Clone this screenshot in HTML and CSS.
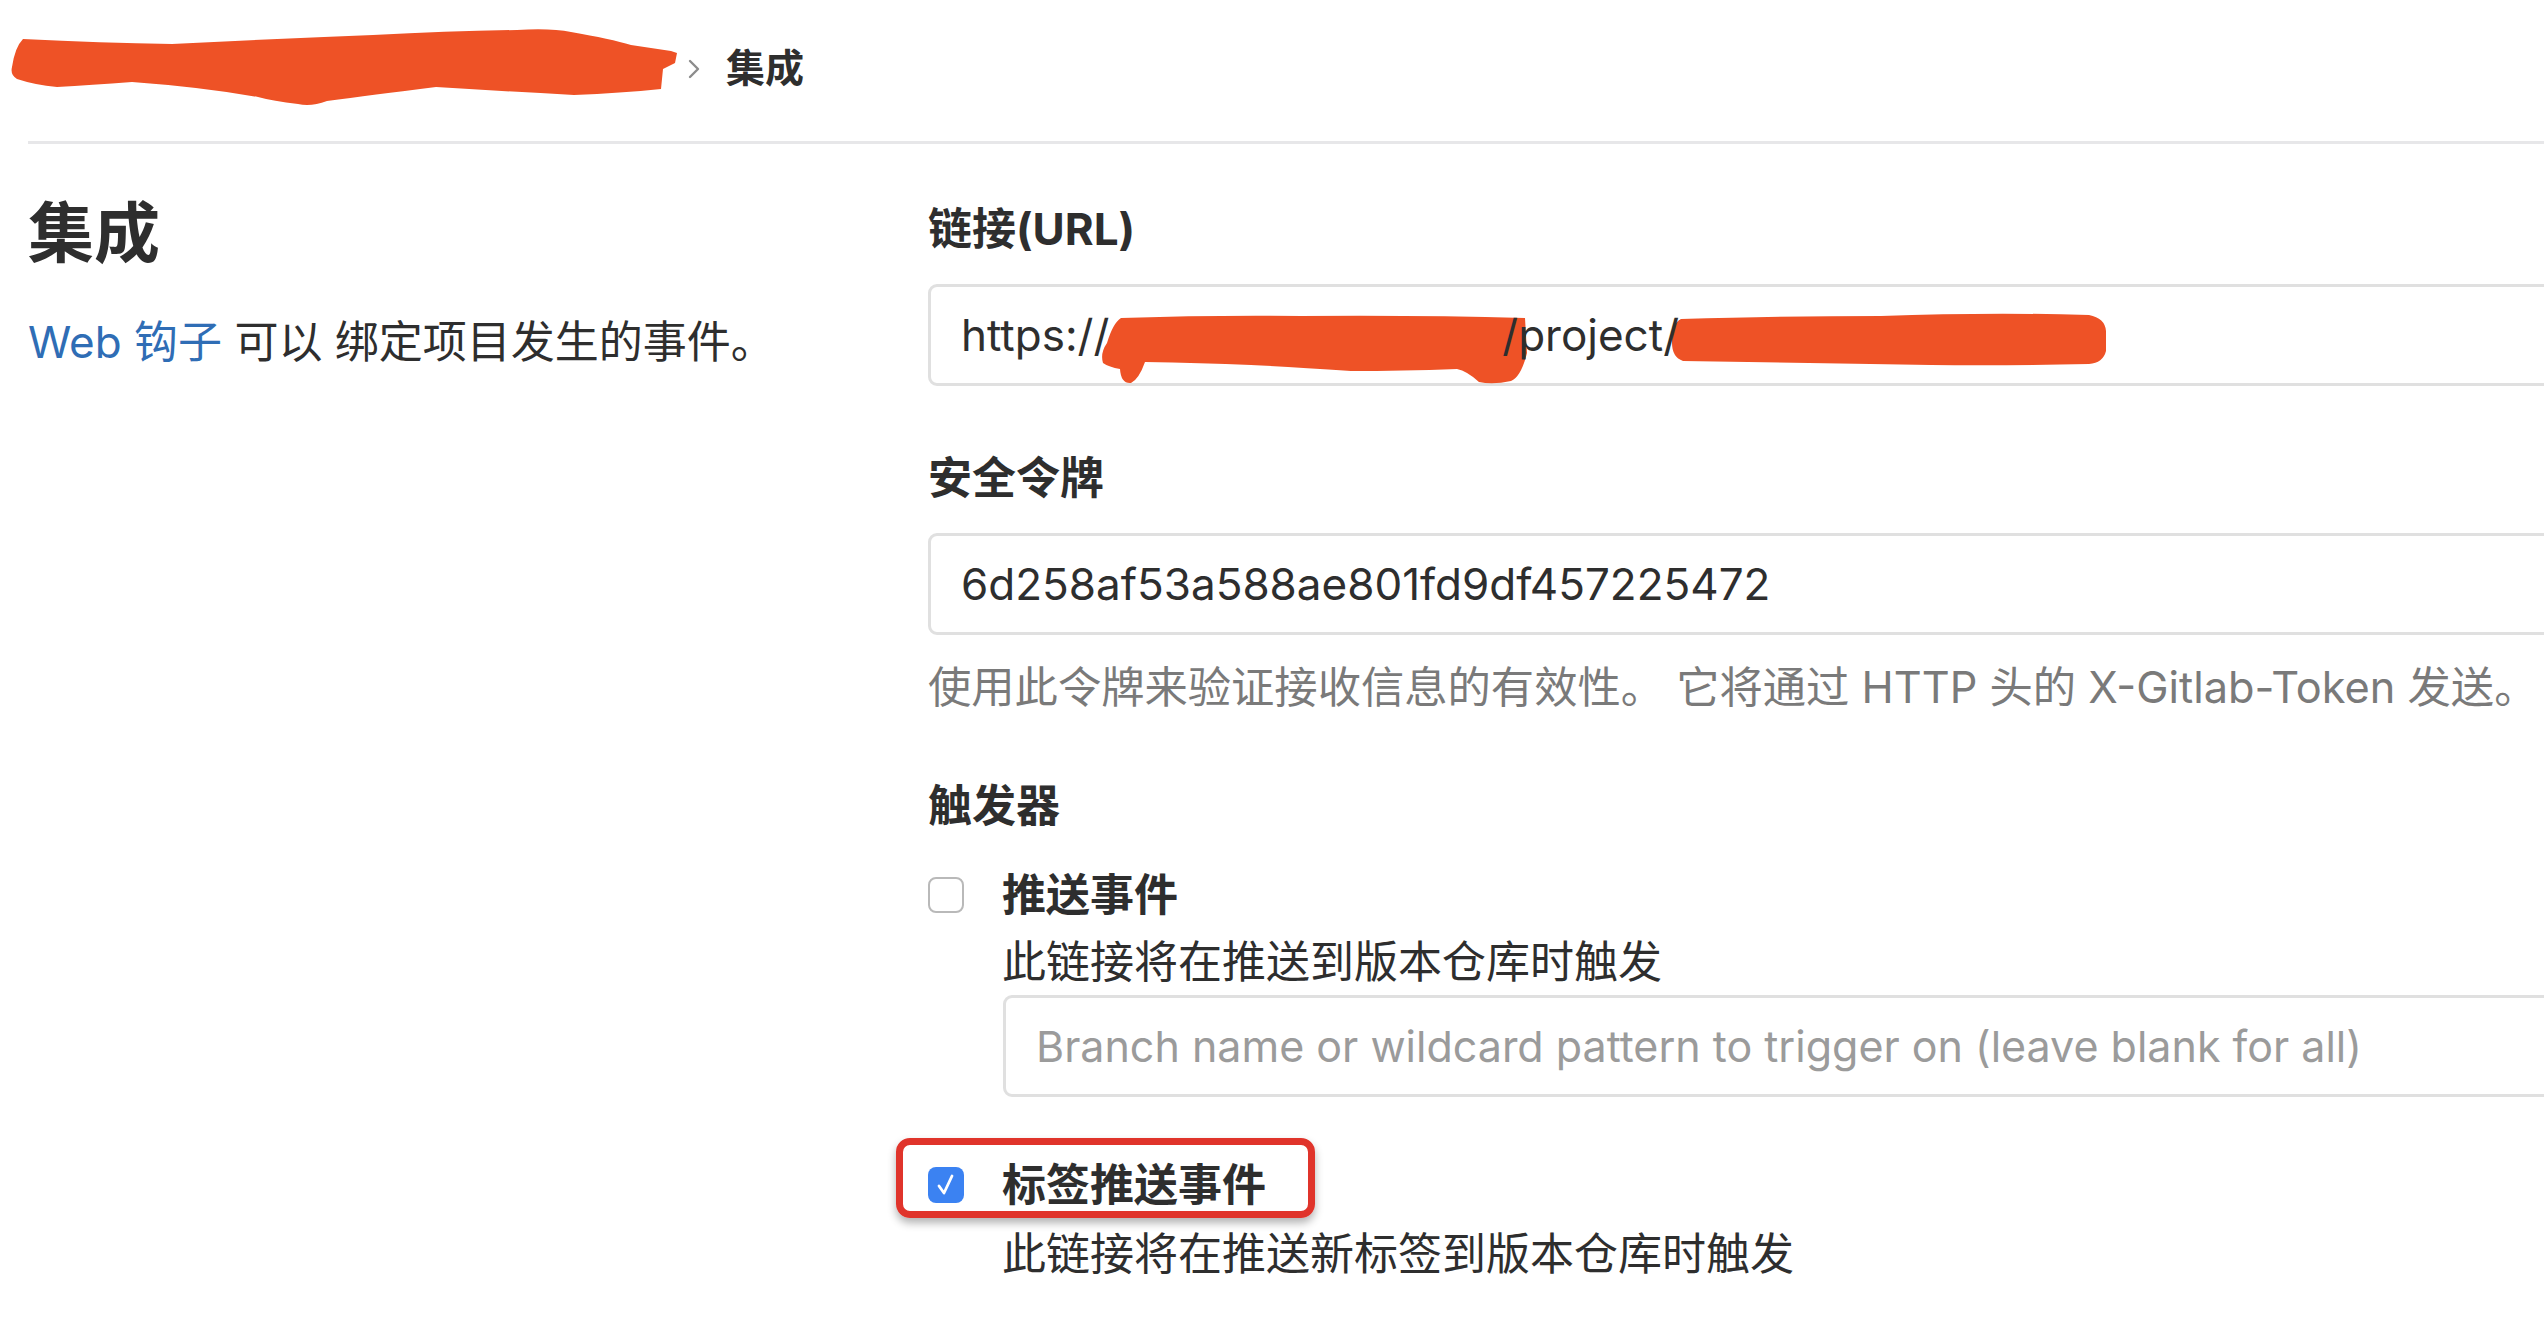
FILE: index.html
```html
<!DOCTYPE html>
<html lang="zh-CN">
<head>
<meta charset="utf-8">
<title>集成</title>
<link rel="stylesheet" href="styles.css">
</head>
<body>
<div class="page">
  <div class="crumbs">
    <svg class="redact-crumb" width="668" height="78" viewBox="0 0 668 78">
      <path d="M12 10 Q90 14 161 15 Q260 10 362 6 Q440 2 506 1 Q540 -1 560 3 Q600 10 620 16 L660 22 L666 24 L664 34 L652 40 L650 60 Q610 64 563 66 Q490 62 425 58 Q360 66 316 72 Q300 78 287 75 Q262 72 247 68 Q190 58 121 53 Q80 56 46 58 Q24 56 6 50 Q-1 46 1 38 Q4 18 12 10 Z" fill="#ee5226"/>
    </svg>
    <svg class="chev" width="14" height="22" viewBox="0 0 14 22">
      <path d="M3 3 L11 11 L3 19" fill="none" stroke="#8c8c8c" stroke-width="2.4" stroke-linecap="round" stroke-linejoin="round"/>
    </svg>
    <span class="crumb-current">集成</span>
  </div>

  <div class="settings">
    <div class="intro">
      <h1 class="title">集成</h1>
      <p class="desc"><a class="link">Web 钩子</a> 可以 绑定项目发生的事件。</p>
    </div>

    <div class="form">
      <div class="group group-url">
        <div class="label">链接(URL)</div>
        <div class="field field-url">
          <span class="val">https://</span>
          <svg class="redact-1" width="428" height="72" viewBox="0 0 428 72">
            <path d="M20 5 Q110 2 200 3 Q320 2 424 5 L426 40 Q420 64 410 68 Q392 72 378 69 Q366 58 356 56 Q300 58 250 58 Q190 54 150 52 Q100 50 44 49 Q38 66 30 70 Q20 71 19 56 Q8 54 2 50 Q-1 40 6 30 Q12 10 20 5 Z" fill="#ee5226"/>
          </svg>
          <span class="val val-path">/project/</span>
          <svg class="redact-2" width="436" height="54" viewBox="0 0 436 54">
            <path d="M10 6 Q120 3 210 3 Q320 -1 418 2 Q434 5 435 18 L435 38 Q432 50 418 51 Q330 53 260 52 Q140 50 12 48 Q1 44 1 30 Q1 10 10 6 Z" fill="#ee5226"/>
          </svg>
        </div>
      </div>

      <div class="group group-token">
        <div class="label">安全令牌</div>
        <div class="field"><span class="val">6d258af53a588ae801fd9df457225472</span></div>
        <div class="help">使用此令牌来验证接收信息的有效性。 它将通过 HTTP 头的 X-Gitlab-Token 发送。</div>
      </div>

      <div class="group group-trigger">
        <div class="label label-trigger">触发器</div>

        <div class="check-item">
          <div class="check-row">
            <span class="box"></span>
            <span class="check-label">推送事件</span>
          </div>
          <div class="check-help">此链接将在推送到版本仓库时触发</div>
          <div class="field field-branch"><span class="placeholder">Branch name or wildcard pattern to trigger on (leave blank for all)</span></div>
        </div>

        <div class="check-item item-tag">
          <div class="check-row">
            <span class="box box-checked">
              <svg width="36" height="36" viewBox="0 0 36 36"><path d="M11 19 L16 26 L24 9" fill="none" stroke="#fff" stroke-width="2.8" stroke-linecap="round" stroke-linejoin="round"/></svg>
            </span>
            <span class="check-label">标签推送事件</span>
            <span class="highlight"></span>
          </div>
          <div class="check-help check-help-tag">此链接将在推送新标签到版本仓库时触发</div>
        </div>
      </div>
    </div>
  </div>
</div>
</body>
</html>
```

FILE: styles.css
```css
html, body {
  margin: 0;
  padding: 0;
  background: #ffffff;
}

body {
  width: 2544px;
  height: 1318px;
  overflow: hidden;
  font-family: Inter, "Noto Sans CJK SC", "Noto Sans", sans-serif;
  color: #2e2e2e;
}

.page {
  width: 2544px;
}

/* breadcrumbs */
.crumbs {
  margin-left: 28px;
  height: 135px;
  padding-bottom: 6px;
  border-bottom: 3px solid #e7e7e9;
  display: flex;
  align-items: center;
}

.redact-crumb {
  margin-left: -17px;
  flex: none;
}

.chev {
  flex: none;
  margin-left: 8px;
  margin-top: 2px;
}

.crumb-current {
  margin-left: 25px;
  font-size: 39px;
  font-weight: 700;
  line-height: 56px;
  color: #2e2e2e;
}

/* settings */
.settings {
  display: flex;
  margin-left: 28px;
}

.intro {
  width: 900px;
  flex: none;
}

.title {
  margin: 49px 0 0;
  font-size: 66px;
  line-height: 80px;
  font-weight: 700;
  color: #2e2e2e;
}

.desc {
  margin: 39px 0 0;
  font-size: 44px;
  line-height: 60px;
  color: #2e2e2e;
  white-space: nowrap;
}

.link {
  color: #2f6db5;
  text-decoration: none;
}

.form {
  width: 1800px;
  flex: none;
  padding-top: 55px;
}

.label {
  font-size: 44px;
  line-height: 60px;
  font-weight: 700;
  color: #2e2e2e;
  margin-bottom: 25px;
}

.field {
  box-sizing: border-box;
  height: 102px;
  border: 3px solid #e0e0e0;
  border-radius: 9px;
  padding: 0 30px;
  display: flex;
  align-items: center;
  font-size: 44px;
  color: #2e2e2e;
  white-space: nowrap;
}

.val {
  line-height: 60px;
}

.redact-1 {
  flex: none;
  align-self: flex-start;
  margin-top: 26px;
  margin-left: -8px;
  margin-right: -27px;
}

.val-path {
  position: relative;
}

.redact-2 {
  flex: none;
  align-self: flex-start;
  margin-top: 26px;
  margin-left: -8px;
}

.group-url {
  margin-bottom: 62px;
}

.help {
  margin-top: 22px;
  font-size: 43.3px;
  line-height: 60px;
  color: #7a7a7a;
  white-space: nowrap;
}

.group-token {
  margin-bottom: 59px;
}

.label-trigger {
  margin-bottom: 29px;
}

.check-row {
  position: relative;
  display: flex;
  align-items: center;
  height: 60px;
}

.box {
  box-sizing: border-box;
  width: 36px;
  height: 36px;
  border: 2px solid #b9b9b9;
  border-radius: 8px;
  background: #ffffff;
  flex: none;
  margin-right: 38px;
}

.box-checked {
  border: none;
  background: #3b82f2;
  display: flex;
}

.check-label {
  font-size: 44px;
  line-height: 60px;
  font-weight: 700;
  color: #2e2e2e;
}

.check-help {
  margin-top: 7px;
  padding-left: 74px;
  font-size: 44px;
  line-height: 60px;
  color: #2e2e2e;
  white-space: nowrap;
}

.field-branch {
  margin-top: 3px;
  margin-left: 75px;
  font-size: 43px;
}

.placeholder {
  color: #9b9b9b;
  line-height: 60px;
}

.item-tag {
  margin-top: 58px;
}

.check-help-tag {
  margin-top: 9px;
}

.highlight {
  position: absolute;
  left: -32px;
  top: -17px;
  width: 419px;
  height: 80px;
  box-sizing: border-box;
  border: 7px solid #e0342b;
  border-radius: 14px;
  box-shadow: 0 5px 8px rgba(0, 0, 0, 0.3);
}
```
